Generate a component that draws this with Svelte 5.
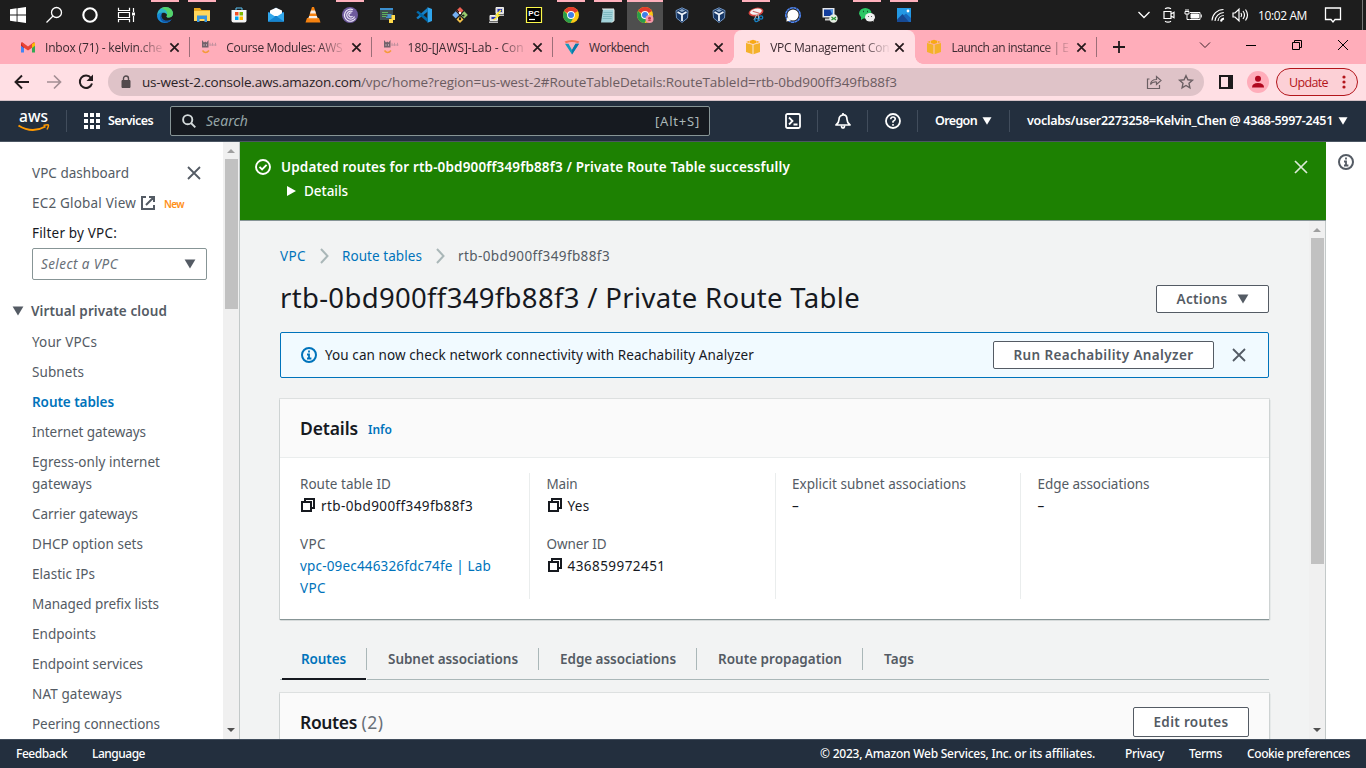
<script>
  // Spreads a label's letter spacing so that it fills its designed width.
  function fit(node, width) {
    const n = [...node.textContent].length;
    const w = node.getBoundingClientRect().width;
    node.style.letterSpacing = (width - w) / n + 'px';
  }

  const apps = [
    ['edge', 'run'], ['folder', 'run'], ['store', ''], ['mail', ''], ['vlc', ''], ['bittorrent', 'run'],
    ['python', ''], ['code', ''], ['git', ''], ['putty', ''], ['pycharm', ''], ['chrome', 'run'],
    ['notepad', 'run'], ['chrome2', 'on'], ['box', ''], ['box', ''], ['snip', 'run'], ['signal', ''],
    ['remote', ''], ['wechat', 'run'], ['photos', 'run']
  ];
  const tabs = [
    { icon: 'gmail', text: 'Inbox (71) - kelvin.che', w: 117 },
    { icon: 'canvas', text: 'Course Modules: AWS', w: 116 },
    { icon: 'canvas', text: '180-[JAWS]-Lab - Con', w: 116 },
    { icon: 'vocareum', text: 'Workbench', w: 60, whole: true },
    { icon: 'cube', text: 'VPC Management Con', w: 119, active: true },
    { icon: 'cube', text: 'Launch an instance | E', w: 117 }
  ];
  const links = [
    ['Your VPCs', 65], ['Subnets', 52], ['Route tables', 82], ['Internet gateways', 114],
    ['Egress-only internet', 128, 'gateways', 60], ['Carrier gateways', 106], ['DHCP option sets', 111],
    ['Elastic IPs', 63], ['Managed prefix lists', 127], ['Endpoints', 64], ['Endpoint services', 111],
    ['NAT gateways', 90], ['Peering connections', 128]
  ];
  const pageTabs = [
    ['Routes', 45], ['Subnet associations', 130], ['Edge associations', 116], ['Route propagation', 124], ['Tags', 30]
  ];
</script>

{#snippet t(text, w)}<span class="t" use:fit={w}>{text}</span>{/snippet}

{#snippet cross(s, c, k)}
  <svg width={s} height={s} viewBox="0 0 16 16" fill="none" stroke={c} stroke-width={k}><path d="M2 2l12 12M14 2L2 14" /></svg>
{/snippet}

{#snippet caret(c, s)}
  <svg width={s} height={s} viewBox="0 0 12 12"><path d="M.6 1.5h10.8L6 10.5z" fill={c} /></svg>
{/snippet}

{#snippet copy()}
  <svg width="16" height="16" viewBox="0 0 16 16" fill="none" stroke="#16191f" stroke-width="2"><path d="M2 5h9v9H2zM5 5V2h9v9h-3" /></svg>
{/snippet}

{#snippet info(c)}
  <svg width="16" height="16" viewBox="0 0 16 16" fill="none" stroke={c} stroke-width="2"><circle cx="8" cy="8" r="7" /><path d="M8 3.600v2M6 7.500h2v4M6 11.500h4.400" stroke-width="1.800" /></svg>
{/snippet}

{#snippet icon(n)}
  <svg width="16" height="16" viewBox="0 0 16 16" fill="none">
    {#if n === 'edge'}
      <path d="M0 8.5C.3 3.5 3.8 0 8.2 0 13 0 16 3.3 16 6.5c0 2.6-2 4-4.2 4-2 0-2.7-.8-2-1.6C10.500 7.500 9 5.700 6.500 5.700 3.500 5.700 1.300 7.200 0 8.500z" fill="#2fb5c8" />
      <path d="M8.500 0C13 0 16 3.300 16 6.500c0 2.600-2 4-4.200 4-2 0-2.700-.8-2-1.600C11 6 9.500 2 4 1.500 5.300.5 6.800 0 8.500 0z" fill="#55d368" />
      <path d="M0 8.500C1 6.500 3.500 5.200 6 5.400c-2 1.200-2.300 3.600-1 5.900 1.800 3 6 3.400 9.700 1C13.200 14.700 10.900 16 8 16 3.500 16 0 12.800 0 8.500z" fill="#1689d8" />
      <path d="M6 6.200c-2 1.300-2.200 3.500-1 5.300 1.700 2.500 6 3.300 9.700.8C12 17 5 16.300 3.500 12 2.700 9.500 3.800 7 6 6.200z" fill="#1255a6" />
    {:else if n === 'folder'}
      <path d="M0 1h6l1.500 2H16v11H0z" fill="#e9a820" /><path d="M0 4h16v10H0z" fill="#ffd65c" /><path d="M3 8.500h10V15h-2.500v-3h-5v3H3z" fill="#3794dc" />
    {:else if n === 'store'}
      <path d="M5 3.500V1h6v2.500" stroke="#5cc3f4" /><path d="M.5 3h15v10.500a2 2 0 0 1-2 2h-11a2 2 0 0 1-2-2z" fill="#f5f5f5" />
      <path d="M4 5h3.500v3.500H4z" fill="#f25022" /><path d="M8.500 5H12v3.500H8.500z" fill="#7fba00" /><path d="M4 9.500h3.500V13H4z" fill="#00a4ef" /><path d="M8.500 9.500H12V13H8.500z" fill="#ffb900" />
    {:else if n === 'mail'}
      <path d="M0 6l8-5.500L16 6v8.500H0z" fill="#0f5fa8" /><path d="M2 3.500L8 .8l6 2.700V9H2z" fill="#fff" /><path d="M0 5l8 5 8-5v9.500H0z" fill="#32a8ec" /><path d="M0 14.500l8-5.500 8 5.500z" fill="#1584d0" />
    {:else if n === 'vlc'}
      <path d="M2 11h12l1.500 4.500H.5z" fill="#f58210" /><path d="M7 0h2l4 12.500c-2 1.500-8 1.500-10 0z" fill="#f58210" /><path d="M6 3.500h4l1 3H5zM4.200 9h7.600l.8 2.300H3.400z" fill="#f4eee9" />
    {:else if n === 'bittorrent'}
      <circle cx="8" cy="8" r="8" fill="#6e5a9d" /><path d="M13.500 11.500A6 6 0 1 1 11 2.800M12.500 9.500a4 4 0 1 1-2-5M10.500 9a2 2 0 1 1-1-3" stroke="#e9e4f5" stroke-width="1.200" />
    {:else if n === 'python'}
      <path d="M1 1h13v12H1z" fill="#3e4d52" /><path d="M1 1h13v2H1z" fill="#3c90d0" /><path d="M3 5.500h6M3 7.500h8M3 9.500h4" stroke="#5fb35d" /><path d="M8.500 7h4v4H7V9.500h1.500z" fill="#4a90cb" /><path d="M12.500 8H16v5h-2v3h-4v-4h2.500z" fill="#ffda4b" />
    {:else if n === 'code'}
      <path d="M11.500.2L16 2v12l-4.500 1.800z" fill="#2fa5ed" /><path d="M11.800.5v4L2 12.200.3 10.700z" fill="#1580c7" /><path d="M11.800 15.500v-4L2 3.800.3 5.300z" fill="#0069aa" />
    {:else if n === 'git'}
      <path d="M8 0l3.500 3.500L8 7 4.500 3.500z" fill="#ef6054" /><path d="M3.700 4.300L7.200 8l-3.500 3.500L.2 8z" fill="#75aef0" /><path d="M12.300 4.300L15.800 8l-3.500 3.500L8.800 8z" fill="#99cc6e" /><path d="M8 9l3.500 3.500L8 16l-3.500-3.500z" fill="#f5c34b" /><path d="M5 3l6 6M8 6v7" stroke="#222" /><circle cx="8" cy="6" r="1.200" fill="#fff" /><circle cx="8" cy="12" r="1.200" fill="#222" /><circle cx="11.500" cy="8.500" r="1" fill="#222" />
    {:else if n === 'putty'}
      <path d="M7 .5h7.500v6H7zM1 8.500h7.500v5H1z" fill="#d4d4d4" stroke="#eee" /><path d="M8.500 2H13v3H8.500zM2.500 10H7v2H2.500z" fill="#2936b5" /><path d="M6 7.500h9v1.500H6zM0 14.500h9V16H0z" fill="#bbb" /><path d="M12 3L7.500 8l2.500.5L4.500 13" stroke="#ffec31" stroke-width="1.500" />
    {:else if n === 'pycharm'}
      <path d="M.5.5h15v15H.5z" fill="#000" stroke="#fcf84a" stroke-width="1.200" /><text x="2.300" y="8.800" font-family="Liberation Sans" font-size="8" font-weight="bold" fill="#fff">PC</text><path d="M3 12.500h6" stroke="#fff" stroke-width="1.200" />
    {:else if n === 'chrome' || n === 'chrome2'}
      <circle cx="8" cy="8" r="8" fill="#fbc916" /><path d="M8 8L1.100 4A8 8 0 0 1 15 4z" fill="#e33b2e" /><path d="M8 8h-3L1.100 4A8 8 0 0 0 7.500 16L11 9.500z" fill="#2a9d4a" /><circle cx="8" cy="8" r="3.900" fill="#fff" /><circle cx="8" cy="8" r="3" fill="#3f7fe8" />
      {#if n === 'chrome2'}<circle cx="12.500" cy="12" r="4" fill="#f59aa8" /><circle cx="12.500" cy="11.300" r="1.500" fill="#c4354d" /><path d="M10.500 14q2-1.800 4 0z" fill="#c4354d" />{/if}
    {:else if n === 'notepad'}
      <path d="M3 2h11v12l-2 1.500H1z" fill="#a3d3da" /><path d="M3 1v2M5 1v2M7 1v2M9 1v2M11 1v2M13 1v2" stroke="#eee" /><path d="M3.500 5.500h9M3.200 7.500h9M3 9.500h9M2.600 11.500h9" stroke="#6fadb5" stroke-width=".7" /><path d="M14 2.500v11L12 15.500" stroke="#f0f0e9" />
    {:else if n === 'box'}
      <path d="M8 .8l6 2.800-.5 7.500L8 15.500 2.500 11 2 3.600z" fill="#173765" stroke="#6f91bc" /><path d="M3.500 5L8 7.500 12.500 5M8 7.500V14" stroke="#eef4fb" stroke-width="1.800" /><path d="M5 3.500L8 2l3 1.500-3 1.500z" fill="#91abc9" />
    {:else if n === 'snip'}
      <g transform="rotate(-12 8 5)"><ellipse cx="8" cy="5" rx="7.500" ry="4.200" fill="#d8443f" /><ellipse cx="8" cy="4.600" rx="6" ry="2.900" fill="#f5f4f4" /><path d="M5 3.500l6 3.500" stroke="#c66" /></g><path d="M9 7l-3 6M10 7l1 7" stroke="#ccc" /><circle cx="8.500" cy="13" r="1.700" stroke="#1681c4" stroke-width="1.300" /><circle cx="13" cy="10.500" r="1.700" stroke="#1681c4" stroke-width="1.300" />
    {:else if n === 'signal'}
      <circle cx="8" cy="8" r="7.200" stroke="#4e86f4" stroke-width="1.600" stroke-dasharray="3 .4" /><circle cx="8" cy="8" r="5.600" fill="#fff" /><path d="M2.500 10l-1.200 4.500L6 13.500z" fill="#fff" />
    {:else if n === 'remote'}
      <path d="M.5 1h12v9.500H.5z" fill="#e4e7ec" /><path d="M2 2.500h9v6.500H2z" fill="#123c9c" /><path d="M8 2.500h3V9z" fill="#4e95e8" /><path d="M3 11.500h6v2H3z" fill="#ccc" /><circle cx="11.500" cy="11.500" r="4.200" fill="#e7eee4" /><path d="M9.500 10l2 1.500-2 1.500M14 10l-2 1.500 2 1.500" stroke="#279436" stroke-width="1.200" />
    {:else if n === 'wechat'}
      <ellipse cx="6.300" cy="6.200" rx="6.200" ry="5.300" fill="#2dc765" /><path d="M2 10v3l3-2z" fill="#2dc765" /><ellipse cx="11" cy="10.300" rx="5" ry="4.200" fill="#f0f0f0" /><path d="M13 13l1.500 2v-3z" fill="#f0f0f0" /><path d="M4 4.500h1M8 4.500h1" stroke="#145c2f" stroke-width="1.500" /><path d="M9 9.500h1M12 9.500h1" stroke="#666" />
    {:else if n === 'photos'}
      <path d="M1 1h14v14H1z" fill="#2398e4" /><path d="M1 12.500L6.500 7l8 8H1z" fill="#174a94" /><path d="M7.500 8.500L10 6.500l5 4.500v4h-2z" fill="#1a67bb" /><circle cx="12" cy="4" r="1.400" fill="#fff" />
    {:else if n === 'gmail'}
      <path d="M1 3.500v10h3V7.500z" fill="#4285f4" /><path d="M15 3.500v10h-3V7.500z" fill="#34a853" /><path d="M1 3.500L4 5v4L1 6.700z" fill="#c5221f" /><path d="M2 3l6 4.500L14 3l1 1.500-3 4.200L8 11.500 4 8.700 1 4.500z" fill="#ea4335" /><path d="M15 3.500L12 5v4l3-2.300z" fill="#fbbc04" />
    {:else if n === 'canvas'}
      <path d="M1 1v7.500h6.500V1L5.500 3.500 4.200 2.500 3 3.500z" fill="#74626b" /><path d="M3 5v2M5.500 5v2" stroke="#bba0aa" /><path d="M8.500 6h7M9 3.800v3M11.500 3.800v3M14.500 3.800v3" stroke="#c4929f" /><path d="M1.500 11.500Q4.500 15.500 8 11.500" stroke="#f49a39" stroke-width="1.600" />
    {:else if n === 'vocareum'}
      <path d="M.5 2.500Q8-.5 15.500 2.500L14 4.300Q8 1.700 2 4.300z" fill="#f47058" /><path d="M1 4.800h3.500L8 11l3.500-6.200H15L8 15.500z" fill="#1499bc" /><path d="M8 11l3.500-6.200H15L8 15.500z" fill="#0b78a9" />
    {:else if n === 'cube'}
      <path d="M1 3L8 .8 15 3 8 5z" fill="#f8a913" /><path d="M1 4l6.500 1.700v9.500L1 13zM15 4L8.500 5.700v9.500L15 13z" fill="#f4b12b" /><path d="M8 5.700v9.500M4.500 2v2.500M11.500 2v2.500" stroke="#f9cf7c" stroke-width=".8" />
    {/if}
  </svg>
{/snippet}

<div class="screen">
  <div class="taskbar">
    <div class="sys"><svg width="16" height="16" viewBox="0 0 16 16" fill="#fff"><path d="M0 2.200l6.600-.9v6.200H0zM7.500 1.200L16 0v7.500H7.500zM0 8.400h6.600v6.300L0 13.800zM7.500 8.400H16V16l-8.500-1.200z" /></svg></div>
    <div class="sys"><svg width="18" height="18" viewBox="0 0 18 18" fill="none" stroke="#fff" stroke-width="1.300"><circle cx="11.500" cy="6.500" r="5" /><path d="M8 10L1.500 16.500" /></svg></div>
    <div class="sys"><svg width="18" height="18" viewBox="0 0 18 18" fill="none" stroke="#fff" stroke-width="2.100"><circle cx="9" cy="9" r="6.700" /></svg></div>
    <div class="sys"><svg width="18" height="16" viewBox="0 0 18 16" fill="none" stroke="#fff"><path d="M1.500.8v2.700h11V.8M1.500 5.500h11v5h-11zM1.500 15.200v-2.700h11v2.700M16.500 1v4M16.500 9v6" stroke-width="1.200" /><path d="M15 5.500h3v3h-3z" fill="#fff" stroke="none" /></svg></div>
    <div class="apps">
      {#each apps as [name, state]}
        <div class="app {state}">{@render icon(name)}</div>
      {/each}
    </div>
    <div class="tray">
      <svg width="14" height="16" viewBox="0 0 14 16" fill="none" stroke="#fff" stroke-width="1.300"><path d="M1.500 5L7 10.500 12.500 5" /></svg>
      <svg width="14" height="16" viewBox="0 0 14 16" fill="none" stroke="#fff" stroke-width="1.200"><path d="M3 1.800Q6-.2 9 1.800M3 14.200Q6 16.200 9 14.200M2 4.500h7v7H2zM9 7l3-1.700v5.400L9 9" /></svg>
      <svg width="18" height="14" viewBox="0 0 18 14" fill="none" stroke="#fff"><path d="M6 4.500h10v7H5.500M17.300 6.500v3M1 3.500h4v2.500H1zM2 1v2M4 1v2M3 6v5.500h2.500" /><path d="M7 6h7.500v4H7z" fill="#fff" /></svg>
      <svg width="14" height="14" viewBox="0 0 14 14" fill="none" stroke="#fff" stroke-width="1.100"><path d="M1 12.500A11.500 11.500 0 0 1 12.500 1.500M4 13a9 9 0 0 1 8.800-8.500M7 13a6 6 0 0 1 5.800-5.500" /><path d="M10 13.500A3.500 3.500 0 0 1 13 10.500" stroke-width="2" /></svg>
      <svg width="17" height="16" viewBox="0 0 17 16" fill="none" stroke="#fff" stroke-width="1.200"><path d="M1 6h2l4-3.800v11.600L3 10H1zM9 6q1.300 2 0 4M11 4q3 4 0 8M13.500 2.500q4 5.500 0 11" /></svg>
      <span class="clock">{@render t('10:02 AM', 49)}</span>
      <svg class="notice" width="18" height="16" viewBox="0 0 18 16" fill="none" stroke="#fff" stroke-width="1.300"><path d="M1.500 1h15v11.500H11L9 15l-2-2.500H1.500z" /></svg>
      <i></i>
    </div>
  </div>

  <div class="tabs">
    {#each tabs as tab, i}
      <div class="tab" class:active={tab.active} class:sep={i !== 3 && i !== 4}>
        {@render icon(tab.icon)}
        <div class="title" class:whole={tab.whole}>{@render t(tab.text, tab.w)}</div>
        {@render cross(11, '#24191c', 2.500)}
      </div>
    {/each}
    <svg class="plus" width="12" height="12" viewBox="0 0 12 12" stroke="#201a1c" stroke-width="1.800"><path d="M6 0v12M0 6h12" /></svg>
    <div class="win">
      <svg width="12" height="12" viewBox="0 0 12 12" fill="none" stroke="#3a2229"><path d="M1 3.500l5 5 5-5" /></svg>
      <svg width="12" height="12" viewBox="0 0 12 12" stroke="#000"><path d="M1 6.500h10" /></svg>
      <svg width="12" height="12" viewBox="0 0 12 12" fill="none" stroke="#000"><path d="M1.500 3.500h7v7h-7zM3.500 3.500v-2h7v7h-2" /></svg>
      <svg width="12" height="12" viewBox="0 0 12 12" stroke="#000"><path d="M1 1l10 10M11 1L1 11" /></svg>
    </div>
  </div>

  <div class="toolbar">
    <svg width="16" height="16" viewBox="0 0 16 16" fill="none" stroke="#241c1e" stroke-width="1.900"><path d="M15 8H2M8 1.500L1.500 8 8 14.500" /></svg>
    <svg width="16" height="16" viewBox="0 0 16 16" fill="none" stroke="#a38e93" stroke-width="1.700"><path d="M1 8h13M8 1.500L14.500 8 8 14.500" /></svg>
    <svg width="16" height="16" viewBox="0 0 16 16" fill="none" stroke="#241c1e" stroke-width="2"><path d="M13 4A6.200 6.200 0 1 0 14 9.500" /><path d="M15 .5v6.500H8.500z" fill="#241c1e" stroke="none" /></svg>
    <div class="url">
      <svg width="10" height="14" viewBox="0 0 10 14"><path d="M1 5.500h8v7H1z" fill="#534a4d" stroke="#534a4d" /><path d="M2.500 6V3.500a2.500 2.500 0 0 1 5 0V6" fill="none" stroke="#534a4d" stroke-width="1.400" /></svg>
      <div class="address"><b>{@render t('us-west-2.console.aws.amazon.com', 219)}</b>{@render t('/vpc/home?region=us-west-2#RouteTableDetails:RouteTableId=rtb-0bd900ff349fb88f3', 536)}</div>
      <svg width="16" height="16" viewBox="0 0 16 16" fill="none" stroke="#6b5f63" stroke-width="1.200"><path d="M3.500 5H1.500v9.500h12V11M4.500 10.500Q5 5.500 10.500 5.500V2.500l4.500 4-4.500 4V8Q6.500 7.500 4.500 10.500z" /></svg>
      <svg width="16" height="16" viewBox="0 0 16 16" fill="none" stroke="#6b5f63" stroke-width="1.400"><path d="M8 1.700l1.900 4.100 4.500.5-3.400 3 .9 4.500L8 11.500l-3.900 2.300.9-4.500-3.400-3 4.500-.5z" /></svg>
    </div>
    <svg class="panel" width="14" height="14" viewBox="0 0 14 14"><path d="M1 1h12v12H1z" fill="none" stroke="#1d1a1b" stroke-width="2" /><path d="M9 0h5v14H9z" fill="#1d1a1b" /></svg>
    <svg class="avatar" width="22" height="22" viewBox="0 0 22 22"><circle cx="11" cy="11" r="11" fill="#ffadba" /><circle cx="11" cy="7.800" r="3" fill="#b0071e" /><path d="M5 16.500q0-4.500 6-4.500t6 4.500z" fill="#b0071e" /></svg>
    <div class="update">{@render t('Update', 39)}<svg width="4" height="14" viewBox="0 0 4 14" fill="#b3151b"><circle cx="2" cy="2" r="1.600" /><circle cx="2" cy="7" r="1.600" /><circle cx="2" cy="12" r="1.600" /></svg></div>
  </div>

  <div class="aws">
    <svg class="logo" width="34" height="26" viewBox="0 0 34 26"><text x="2" y="14" font-family="Noto Sans" font-size="17" font-weight="500" fill="#fff" textLength="29" lengthAdjust="spacingAndGlyphs">aws</text><path d="M1.500 17.500Q15 26 28.500 18.500" fill="none" stroke="#f90" stroke-width="2" /><path d="M26.500 17.500q5-1.300 5 0t-1.500 4" fill="none" stroke="#f90" stroke-width="1.500" /></svg>
    <i class="bar"></i>
    <svg class="grid" width="16" height="16" viewBox="0 0 16 16" fill="#fff"><path d="M0 0h4v4H0zM6 0h4v4H6zM12 0h4v4h-4zM0 6h4v4H0zM6 6h4v4H6zM12 6h4v4h-4zM0 12h4v4H0zM6 12h4v4H6zM12 12h4v4h-4z" /></svg>
    <strong>{@render t('Services', 45)}</strong>
    <div class="search">
      <svg width="14" height="14" viewBox="0 0 14 14" fill="none" stroke="#d5dbdb" stroke-width="1.900"><circle cx="5.700" cy="5.700" r="4.600" /><path d="M9 9l4.300 4.300" /></svg>
      <em>{@render t('Search', 42)}</em><span class="key">{@render t('[Alt+S]', 45)}</span>
    </div>
    <div class="tools">
      <div><svg width="16" height="16" viewBox="0 0 16 16" fill="none" stroke="#fff" stroke-width="1.800"><rect x="1" y="1" width="14" height="14" rx="1.500" /><path d="M4 4.500L7.500 8 4 11.500M8.500 11.500h4" /></svg></div>
      <div><svg width="16" height="16" viewBox="0 0 16 16" fill="none" stroke="#fff" stroke-width="1.700" stroke-linejoin="round"><path d="M1 12Q4 9.500 4 6.500 4 2.500 8 2t4 4.500Q12 9.500 15 12z" /><path d="M8 0v2M6.500 12.500q0 2.500 1.500 2.500t1.500-2.500" /></svg></div>
      <div><svg width="16" height="16" viewBox="0 0 16 16" fill="none" stroke="#fff" stroke-width="1.800"><circle cx="8" cy="8" r="7" /><path d="M5.700 6.200Q5.900 4 8 4t2.300 2.100Q10.300 7.300 8 8.500v1.300M8 11v1.700" stroke-width="1.600" /></svg></div>
      <div class="region">{@render t('Oregon', 42)}{@render caret('#fff', 10)}</div>
    </div>
    <div class="account">{@render t('voclabs/user2273258=Kelvin_Chen @ 4368-5997-2451', 306)}{@render caret('#fff', 10)}</div>
  </div>

  <div class="body">
    <div class="nav">
      <div class="top"><div>{@render t('VPC dashboard', 97)}</div>{@render cross(16, '#545b64', 1.800)}</div>
      <div class="global">{@render t('EC2 Global View', 104)}<svg width="14" height="14" viewBox="0 0 14 14" fill="none" stroke="#545b64" stroke-width="2"><path d="M5 1H1v12h12V9M8 1h5v5M13 1L5 9" /></svg><small>{@render t('New', 20)}</small></div>
      <div class="filter">{@render t('Filter by VPC:', 85)}</div>
      <div class="select"><em>{@render t('Select a VPC', 77)}</em>{@render caret('#545b64', 12)}</div>
      <div class="group">{@render caret('#545b64', 12)}{@render t('Virtual private cloud', 136)}</div>
      <div class="links">
        {#each links as l}
          <div class:current={l[0] === 'Route tables'}>{@render t(l[0], l[1])}{#if l[2]}<br />{@render t(l[2], l[3])}{/if}</div>
        {/each}
      </div>
    </div>
    <div class="scroll"><b class="up"></b><i class="nthumb"></i><b class="down"></b></div>

    <div class="center">
      <div class="flash">
        <svg width="16" height="16" viewBox="0 0 16 16" fill="none" stroke="#fff" stroke-width="1.900"><circle cx="8" cy="8" r="7" /><path d="M4.500 7.800l2.600 2.600 4.500-4.600" /></svg>
        <div class="msg">
          <div>{@render t('Updated routes for rtb-0bd900ff349fb88f3 / Private Route Table successfully', 509)}</div>
          <div class="more"><svg width="9" height="10" viewBox="0 0 9 10"><path d="M0 0l9 5-9 5z" fill="#fff" /></svg>{@render t('Details', 44)}</div>
        </div>
        {@render cross(16, '#dcebd8', 1.700)}
      </div>
      <div class="view">
        <div class="content">
          <div class="crumbs"><a>{@render t('VPC', 26)}</a><svg width="9" height="16" viewBox="0 0 9 16" fill="none" stroke="#aab7b8" stroke-width="2"><path d="M1 1l6.500 7L1 15" /></svg><a>{@render t('Route tables', 80)}</a><svg width="9" height="16" viewBox="0 0 9 16" fill="none" stroke="#aab7b8" stroke-width="2"><path d="M1 1l6.500 7L1 15" /></svg><span>{@render t('rtb-0bd900ff349fb88f3', 152)}</span></div>
          <div class="heading"><h1>{@render t('rtb-0bd900ff349fb88f3 / Private Route Table', 580)}</h1><button>{@render t('Actions', 51)}{@render caret('#545b64', 12)}</button></div>
          <div class="notebox">{@render info('#0073bb')}<span>{@render t('You can now check network connectivity with Reachability Analyzer', 429)}</span><button>{@render t('Run Reachability Analyzer', 180)}</button>{@render cross(16, '#545b64', 1.800)}</div>

          <div class="card details">
            <div class="chead"><h2>{@render t('Details', 58)}</h2><small>{@render t('Info', 24)}</small></div>
            <div class="cols">
              <div>
                <label>{@render t('Route table ID', 91)}</label><p>{@render copy()}{@render t('rtb-0bd900ff349fb88f3', 152)}</p>
                <label>{@render t('VPC', 26)}</label><p class="link">{@render t('vpc-09ec446326fdc74fe | Lab', 191)}<br />{@render t('VPC', 26)}</p>
              </div>
              <div>
                <label>{@render t('Main', 31)}</label><p>{@render copy()}{@render t('Yes', 22)}</p>
                <label>{@render t('Owner ID', 60)}</label><p>{@render copy()}{@render t('436859972451', 98)}</p>
              </div>
              <div><label>{@render t('Explicit subnet associations', 174)}</label><p>–</p></div>
              <div><label>{@render t('Edge associations', 112)}</label><p>–</p></div>
            </div>
          </div>

          <div class="ptabs">
            {#each pageTabs as [name, w], i}<div class:sel={i === 0}><span class="cell">{@render t(name, w)}</span></div>{/each}
          </div>
          <div class="card routes"><h2>{@render t('Routes', 57)} <small>{@render t('(2)', 22)}</small></h2><button>{@render t('Edit routes', 75)}</button></div>
        </div>
        <div class="scroll"><b class="up"></b><i class="vthumb"></i><b class="down"></b></div>
      </div>
    </div>
    <div class="rail">{@render info('#545b64')}</div>
  </div>

  <div class="foot">
    <span>{@render t('Feedback', 51)}</span><span>{@render t('Language', 53)}</span>
    <span class="legal">{@render t('© 2023, Amazon Web Services, Inc. or its affiliates.', 275)}</span>
    <span>{@render t('Privacy', 39)}</span><span>{@render t('Terms', 33)}</span><span>{@render t('Cookie preferences', 103)}</span>
  </div>
</div>

<style>
  :global(body) { margin: 0; overflow: hidden; }
  .screen, .screen * { box-sizing: border-box; }
  .screen { width: 1366px; height: 768px; overflow: hidden; display: flex; flex-direction: column; font: 13.5px/22px "Noto Sans", sans-serif; color: #16191f; background: #fff; }
  svg { display: block; flex: none; overflow: visible; }
  .t { white-space: pre; display: inline-block; flex: none; }
  h1, h2, p { margin: 0; }

  .taskbar { height: 30px; flex: none; display: flex; background: #1d1d1d; }
  .sys { width: 36px; display: grid; place-items: center; }
  .apps { display: flex; margin-left: 3px; }
  .app { width: 36.950px; padding-right: 1px; display: grid; place-items: center; }
  .app.run { background: linear-gradient(#ffb0bc, #ffb0bc) 4px 0 / 28px 2px no-repeat; }
  .app.on { background: linear-gradient(#ffb0bc 2px, #4e4e4e 2px) 0 0 / 36px 30px no-repeat; }
  .tray { margin-left: auto; display: flex; align-items: center; color: #fff; font: 12px "Open Sans", sans-serif; width: 229px; }
  .tray svg { margin-right: 11px; }
  .tray svg:nth-child(2) { margin-right: 8px; }
  .tray svg:nth-child(3) { margin-right: 9px; }
  .tray svg:nth-child(4) { margin-right: 7px; }
  .tray svg:nth-child(5) { margin-right: 9px; }
  .clock { width: 49px; }
  .tray .notice { margin: 0 20px 0 17px; }
  .tray i { width: 1px; height: 30px; background: #777; }

  .tabs { height: 34px; flex: none; display: flex; align-items: center; padding-left: 9px; background: #ffadba; font: 12px "Open Sans", sans-serif; color: #3a2a30; }
  .tab { width: 181.3px; height: 34px; display: flex; align-items: center; padding: 0 10px 0 11px; position: relative; flex: none; }
  .tab > svg:first-child { margin-top: -1px; }
  .title { flex: 1; margin-left: 9px; overflow: hidden; mask-image: linear-gradient(90deg, #000 92px, transparent 121px); }
  .title.whole { mask-image: none; }
  .tab.sep::after { content: ""; position: absolute; right: 0; top: 7px; width: 1px; height: 20px; background: #9c6e78; }
  .tab.active { background: #ffdfe4; border-radius: 8px 8px 0 0; }
  .tab.active::before, .tab.active::after { content: ""; position: absolute; bottom: 0; width: 8px; height: 8px; }
  .tab.active::before { left: -8px; background: radial-gradient(circle at 0 0, transparent 7.500px, #ffdfe4 8px); }
  .tab.active::after { right: -8px; background: radial-gradient(circle at 100% 0, transparent 7.500px, #ffdfe4 8px); }
  .plus { margin-left: 16px; }
  .win { margin: -5px 17px 0 auto; display: flex; gap: 34px; }

  .toolbar { height: 37px; flex: none; display: flex; align-items: center; padding-left: 14px; background: #ffdfe4; border-bottom: 1px solid #d5c2c7; }
  .toolbar > svg { margin-right: 16px; }
  .url { width: 1096px; height: 28px; margin-left: -2px; display: flex; align-items: center; gap: 16px; padding: 0 10px 0 13px; border-radius: 14px; background: #dfc3c8; font: 13.500px "Open Sans", sans-serif; color: #6b5c61; }
  .address { flex: 1; margin-left: -5px; display: flex; }
  .address b { font-weight: 400; color: #2a2225; }
  .toolbar .panel { margin: 0 14px 0 15px; }
  .toolbar .avatar { margin-right: 7px; }
  .update { width: 82px; height: 28px; border: 1px solid #b3151b; border-radius: 14px; background: #fcd0d6; color: #b3151b; display: flex; align-items: center; padding-left: 12px; gap: 14px; font: 12.500px "Open Sans", sans-serif; }

  .aws { height: 41px; flex: none; display: flex; align-items: center; padding-left: 17px; background: #232f3e; border-bottom: 1px solid #4b5663; color: #fff; font-size: 12.500px; font-weight: 600; }
  .aws strong { font-weight: 600; }
  .bar { width: 1px; height: 22px; background: #414d5c; margin: 0 17px 0 15px; }
  .grid { margin-right: 8px; }
  .search { width: 540px; height: 30px; margin-left: 17px; border: 1px solid #879596; border-radius: 2px; background: #161a20; display: flex; align-items: center; padding: 0 9px 0 11px; font-size: 14px; font-weight: 400; color: #95a5a6; }
  .search em { margin-left: 10px; }
  .key { margin-left: auto; color: #aab7b8; font-size: 13px; }
  .tools { display: flex; margin-left: 58px; }
  .tools > div { width: 50px; height: 22px; border-right: 1px solid #414d5c; display: grid; place-items: center; }
  .tools > .region { width: 92px; display: flex; gap: 5px; align-items: center; padding-left: 17px; }
  .account { display: flex; align-items: center; gap: 5px; margin-left: 17px; }

  .body { height: 597px; flex: none; display: flex; }
  .nav { width: 223px; padding: 20px 16px 0 32px; color: #545b64; overflow: hidden; }
  .top { display: flex; align-items: center; justify-content: space-between; padding-right: 5px; }
  .global { display: flex; align-items: center; height: 22px; margin-top: 8px; }
  .global svg { margin: 0 9px 0 5px; }
  .global small { font-size: 10px; font-weight: 600; color: #ff9019; padding-top: 2px; }
  .filter { margin-top: 8px; color: #16191f; }
  .select { height: 32px; width: 175px; margin-top: 4px; border: 1px solid #879596; border-radius: 2px; display: flex; align-items: center; justify-content: space-between; padding: 0 10px 0 8px; color: #687078; }
  .group { display: flex; align-items: center; gap: 7px; margin: 20px 0 9px -20px; font-weight: 600; }
  .links { display: flex; flex-direction: column; gap: 8px; }
  .links .current { color: #0073bb; font-weight: 600; }

  .scroll { width: 17px; flex: none; background: #f0f0f0; border-right: 1px solid #c3c9c9; display: flex; flex-direction: column; align-items: center; }
  .scroll i { width: 13px; background: #c1c1c1; }
  .scroll b { border: solid transparent; border-width: 0 4px; }
  .scroll .up { border-bottom: 4px solid #9f9f9f; margin: 7px 0 6px; }
  .scroll .down { border-top: 4px solid #505050; margin: auto 0 7px; }
  .nthumb { height: 150px; }
  .vthumb { height: 326px; }

  .center { width: 1086px; flex: none; display: flex; flex-direction: column; }
  .flash { height: 79px; flex: none; display: flex; background: #1d8102; border-bottom: 1px solid #879596; padding: 14px 17px 0 15px; color: #fff; font-weight: 600; }
  .flash > svg { margin-top: 3px; }
  .msg { flex: 1; margin-left: 10px; }
  .more { display: flex; align-items: center; gap: 8px; margin: 2px 0 0 6px; font-weight: 500; }
  .view { height: 518px; display: flex; background: #f2f3f3; }
  .content { width: 1069px; padding: 24px 40px 0; overflow: hidden; }
  .crumbs { display: flex; align-items: center; color: #545b64; }
  .crumbs a, .link { color: #0073bb; }
  .crumbs svg { margin: 0 13.500px; }
  .heading { height: 36px; margin-top: 14px; display: flex; align-items: center; justify-content: space-between; }
  h1 { font-size: 27.500px; line-height: 36px; font-weight: 400; margin-top: -3px; }
  button { height: 28px; border: 1px solid #545b64; border-radius: 2px; background: #fff; padding: 0; color: #545b64; font: 600 13.500px "Noto Sans", sans-serif; display: flex; align-items: center; justify-content: center; gap: 9px; }
  .heading button { width: 113px; }
  .notebox { height: 46px; margin-top: 15px; border: 1px solid #0073bb; border-radius: 2px; background: #f1faff; display: flex; align-items: center; padding: 0 21px 0 20px; }
  .notebox > span, .notebox > :global(span) { margin-left: 8px; }
  .notebox > span { margin-left: 8px; }
  .notebox button { margin: 0 17px 0 auto; width: 221px; }
  .card { background: #fff; box-shadow: 0 1px 1px #879596, 0 0 0 1px #dde0e0, 1px 1px 1px #aab7b8; }
  .details { height: 220px; margin-top: 21px; }
  .chead { height: 59px; display: flex; align-items: center; gap: 10px; padding: 0 0 0 20px; background: #fafafa; border-bottom: 1px solid #eaeded; }
  h2 { font-size: 17.500px; font-weight: 600; line-height: 22px; }
  .chead small { font-size: 12px; font-weight: 600; color: #0073bb; padding-top: 4px; }
  .cols { display: grid; grid-template-columns: 250px 245.500px 245.500px 1fr; padding-top: 15px; }
  .cols > div { height: 126px; padding-left: 16.500px; border-right: 1px solid #eaeded; }
  .cols > div:first-child { padding-left: 20px; }
  .cols > div:last-child { border: 0; }
  label { display: block; color: #545b64; }
  .cols p { line-height: 22px; margin-bottom: 16px; }
  .cols p:has(svg) { display: flex; align-items: center; gap: 5px; }
  .cols p svg { margin-top: -2px; }
  .ptabs { height: 40px; margin-top: 21px; display: flex; border-bottom: 1px solid #aab7b8; font-weight: 600; color: #545b64; }
  .ptabs > div { padding: 8px 0; height: 40px; }
  .cell { display: block; padding: 0 20px 0 21px; border-right: 1px solid #aab7b8; }
  .ptabs > div:last-child .cell { border: 0; }
  .ptabs > .sel { margin-left: 2px; width: 85px; box-shadow: inset -1px 0 #f2f3f3, inset 0 -2px #16191f; color: #0073bb; }
  .ptabs > .sel .cell { padding-left: 19px; }
  .routes { height: 80px; margin-top: 13px; background: #fafafa; padding: 14px 20px 0; display: flex; justify-content: space-between; }
  .routes h2 { line-height: 30px; }
  .routes h2 small { font-size: 17.500px; font-weight: 400; color: #687078; }
  .routes button { height: 30px; width: 116px; }
  .rail { width: 40px; padding: 12px; }

  .foot { height: 29px; flex: none; display: flex; align-items: center; gap: 25px; padding: 0 16px; background: #232f3e; border-top: 1px solid #414d5c; color: #fff; font-size: 12px; font-weight: 500; }
  .foot .legal { margin-left: auto; margin-right: 5px; }
</style>
